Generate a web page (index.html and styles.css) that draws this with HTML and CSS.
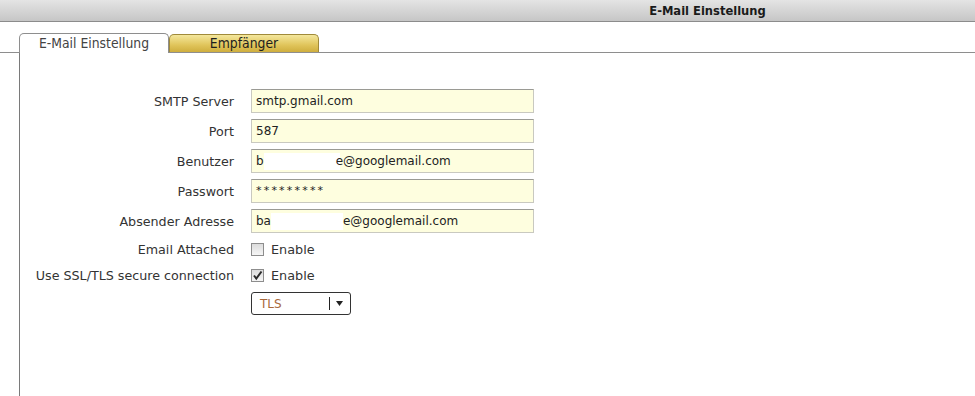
FILE: index.html
```html
<!DOCTYPE html>
<html lang="de">
<head>
  <meta charset="UTF-8" />
  <title>E-Mail Einstellung</title>
  <link rel="stylesheet" href="styles.css">
</head>
<body>

  <div class="titlebar">E-Mail Einstellung</div>

  <div class="tabs">
    <div class="tab tab-active">E-Mail Einstellung</div>
    <div class="tab tab-gold">Empfänger</div>
  </div>

  <div class="panel">
    <form class="form">
      <div class="row">
        <label class="lbl">SMTP Server</label>
        <div class="field">smtp.gmail.com</div>
      </div>
      <div class="row">
        <label class="lbl">Port</label>
        <div class="field">587</div>
      </div>
      <div class="row">
        <label class="lbl">Benutzer</label>
        <div class="field">b<span class="redact r1"></span>e@googlemail.com</div>
      </div>
      <div class="row">
        <label class="lbl">Passwort</label>
        <div class="field pw">*********</div>
      </div>
      <div class="row">
        <label class="lbl">Absender Adresse</label>
        <div class="field">ba<span class="redact r2"></span>e@googlemail.com</div>
      </div>

      <div class="row row-check">
        <label class="lbl">Email Attached</label>
        <span class="check"></span>
        <span class="check-text">Enable</span>
      </div>
      <div class="row row-check">
        <label class="lbl">Use SSL/TLS secure connection</label>
        <span class="check">
          <svg width="11" height="11" viewBox="0 0 11 11"><path d="M2 5.5 L4.3 8.5 L9.5 1.5" fill="none" stroke="#2a2a2a" stroke-width="2"/></svg>
        </span>
        <span class="check-text">Enable</span>
      </div>

      <div class="row row-select">
        <span class="lbl"></span>
        <div class="select">
          <span class="select-value">TLS</span>
          <span class="select-sep"></span>
          <svg class="select-arrow" width="7" height="5" viewBox="0 0 7 5"><path d="M0 0 L7 0 L3.5 5 Z" fill="#222"/></svg>
        </div>
      </div>
    </form>
  </div>

</body>
</html>
```

FILE: styles.css
```css
body {
  margin: 0;
  font-family: 'DejaVu Sans', Verdana, sans-serif;
  font-size: 12px;
  color: #333;
  background: #fff;
  height: 396px;
  overflow: hidden;
  display: flex;
  flex-direction: column;
}

.titlebar {
  height: 21px;
  line-height: 21px;
  padding-left: 440px;
  text-align: center;
  font-family: 'DejaVu Sans Condensed', 'DejaVu Sans', sans-serif;
  font-weight: bold;
  font-size: 12.8px;
  color: #1a1a1a;
  background: linear-gradient(#e4e4e4, #c6c6c6);
  border-bottom: 1px solid #8c8c8c;
}

.tabs {
  display: flex;
  margin-top: 11px;
  padding-left: 19px;
  border-bottom: 1px solid #8e8e8e;
  height: 19px;
  align-items: flex-end;
}

.tab {
  font-family: 'DejaVu Sans Condensed', 'DejaVu Sans', sans-serif;
  font-size: 13.8px;
  text-align: center;
  box-sizing: border-box;
}

.tab-active {
  width: 150px;
  height: 20px;
  line-height: 19px;
  margin-bottom: -1px;
  background: #fff;
  color: #444;
  border: 1px solid #8e8e8e;
  border-bottom: none;
  border-radius: 5px 5px 0 0;
}

.tab-gold {
  width: 150px;
  height: 18px;
  line-height: 17px;
  color: #1e1e1e;
  background: linear-gradient(#f4e79c, #e0c45a 60%, #cfae3e);
  border: 1px solid #a08a3a;
  border-bottom: none;
  border-radius: 5px 5px 0 0;
}

.panel {
  flex: 1;
  margin-left: 19px;
  border-left: 1px solid #7a7a7a;
}

.form {
  padding-top: 36px;
  display: flex;
  flex-direction: column;
  gap: 6px;
}

.row {
  display: flex;
  align-items: center;
  height: 24px;
}

.lbl {
  width: 214px;
  text-align: right;
  margin-right: 17px;
  font-size: 12.7px;
  color: #333;
  white-space: nowrap;
}

.field {
  width: 283px;
  height: 24px;
  box-sizing: border-box;
  padding: 0 4px;
  line-height: 22px;
  background: #fefedf;
  border: 1px solid #c9c9c0;
  border-top-color: #9a9a94;
  color: #222;
  white-space: nowrap;
  overflow: hidden;
}

.field.pw {
  font-size: 11px;
  letter-spacing: 2.2px;
}

.redact {
  display: inline-block;
  height: 17px;
  vertical-align: middle;
  background: #fff;
}

.r1 {
  width: 76px;
  margin-right: -4px;
}

.r2 {
  width: 72px;
}

.row-check {
  height: 20px;
}

.check {
  width: 13px;
  height: 13px;
  box-sizing: border-box;
  border: 1px solid #8d8d8d;
  background: linear-gradient(#dcdcdc, #f6f6f6);
  display: flex;
  align-items: center;
  justify-content: center;
}

.check-text {
  margin-left: 7px;
  font-size: 12.8px;
  color: #333;
}

.row-select {
  margin-top: 1px;
  height: 23px;
}

.select {
  width: 100px;
  height: 23px;
  box-sizing: border-box;
  border: 1px solid #333;
  border-radius: 3px;
  display: flex;
  align-items: center;
  background: #fff;
}

.select-value {
  flex: 1;
  padding-left: 8px;
  color: #a8683a;
}

.select-sep {
  width: 1px;
  height: 13px;
  background: #222;
}

.select-arrow {
  margin: 0 7px 0 6px;
}
```
